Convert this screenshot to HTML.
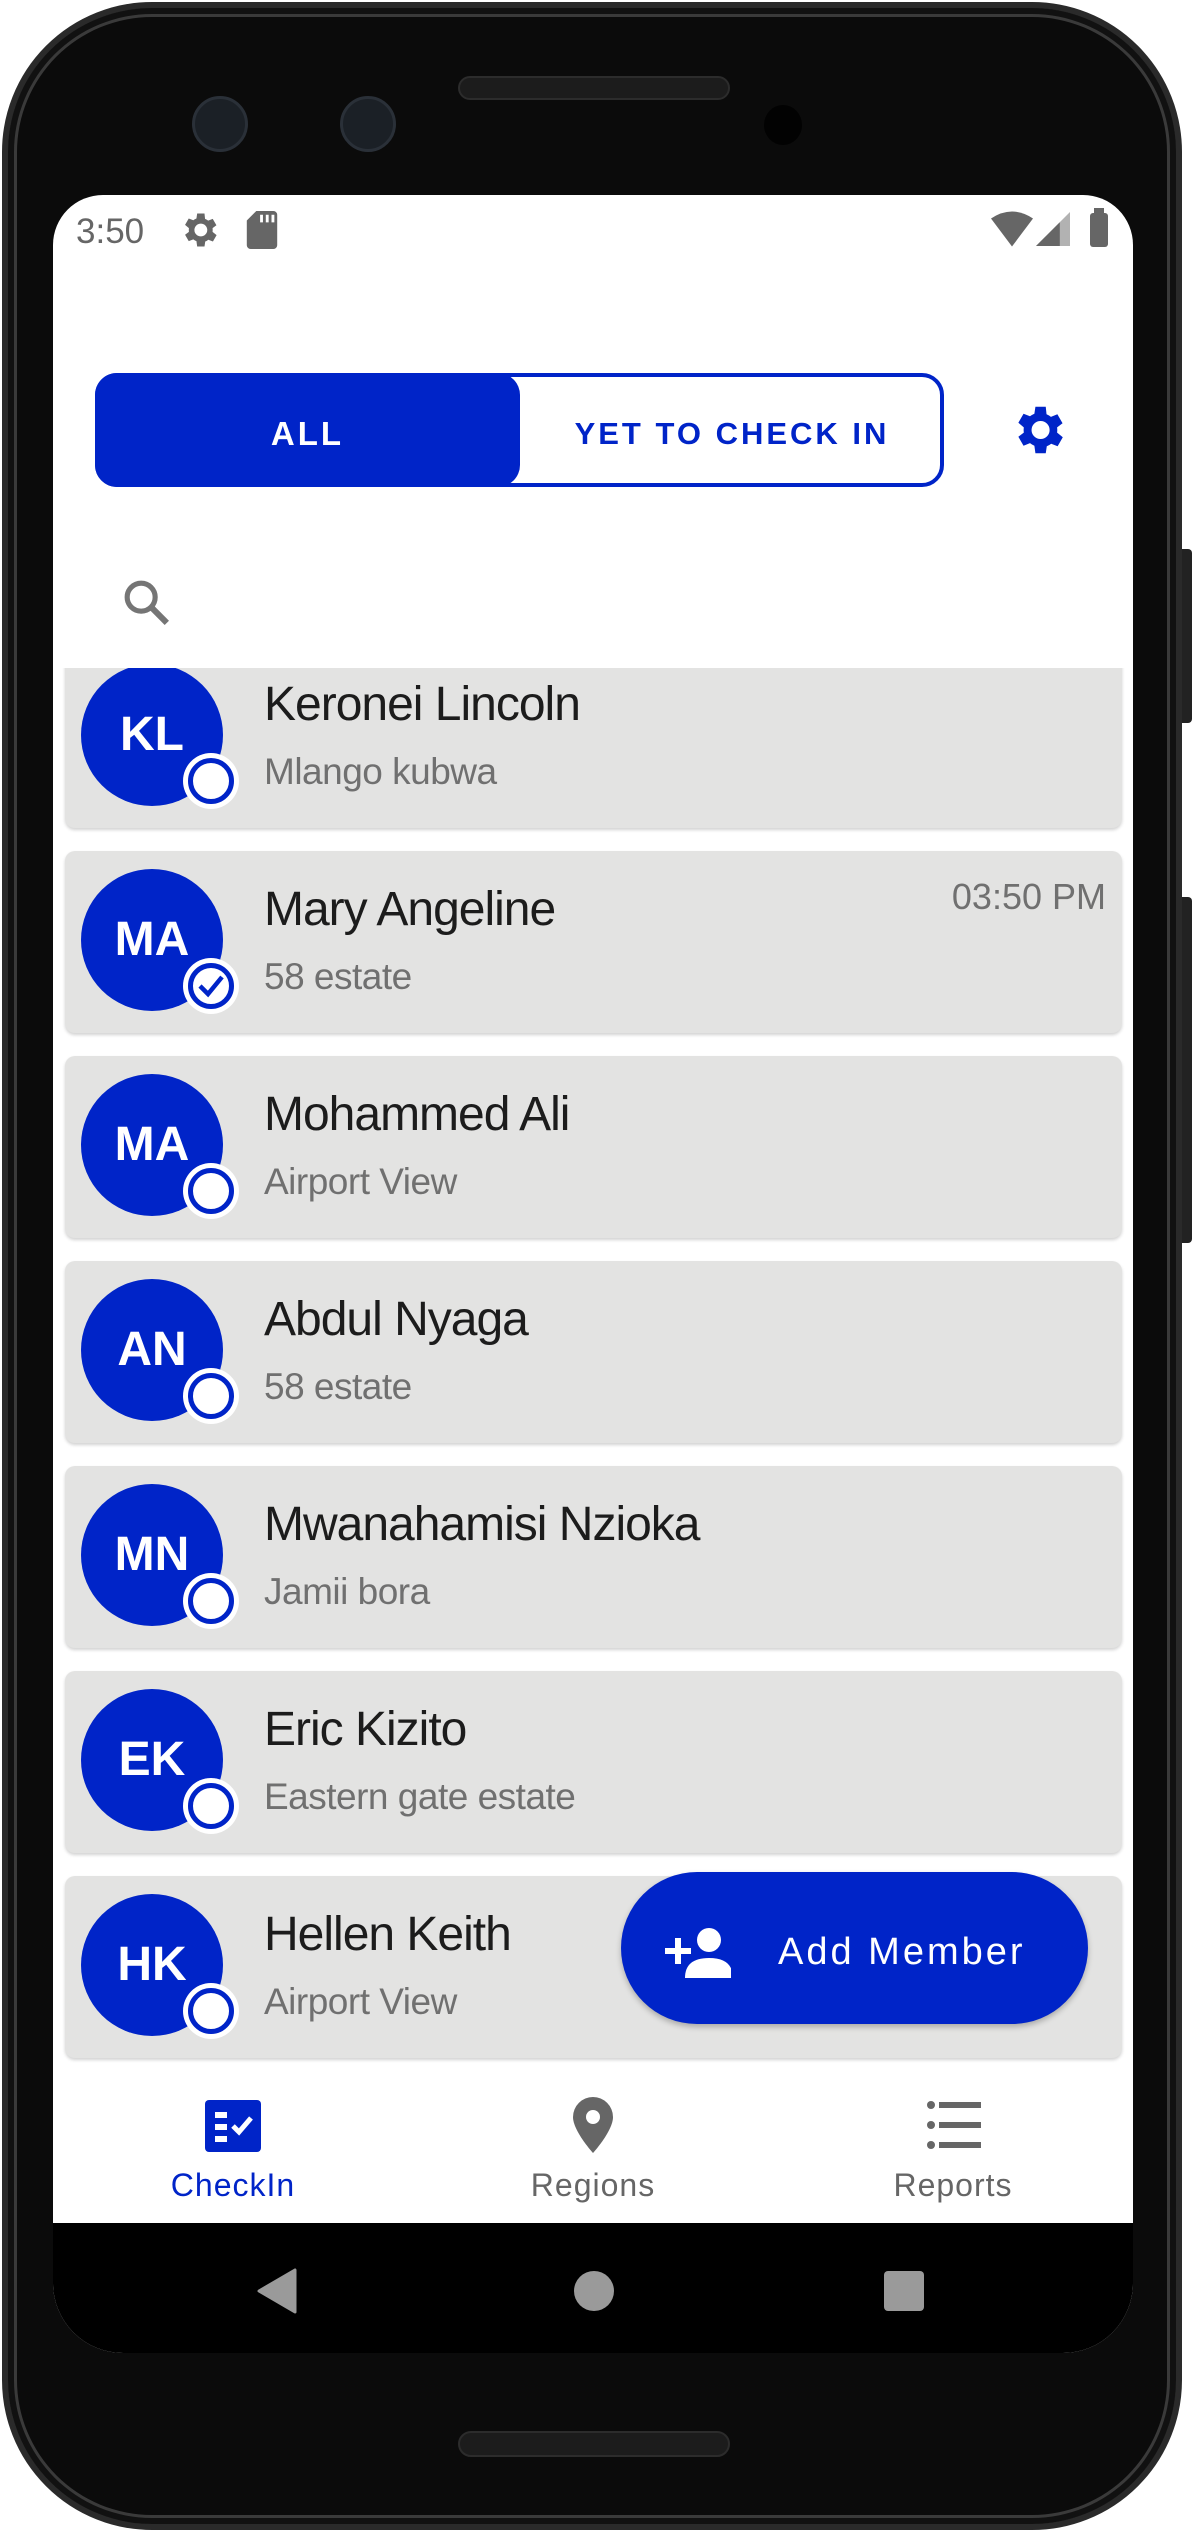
<!DOCTYPE html>
<html><head><meta charset="utf-8"><style>
*{margin:0;padding:0;box-sizing:border-box}
body{width:1194px;height:2532px;background:#fff;position:relative;overflow:hidden;font-family:"Liberation Sans",sans-serif}
.abs{position:absolute}
.phone{left:2px;top:2px;width:1180px;height:2528px;border-radius:150px;background:#0b0b0b;border:6px solid #2a2a2a;box-shadow:inset 0 0 0 6px #111,inset 0 0 0 9px #3a3a3a}
.screen{left:53px;top:195px;width:1080px;height:2158px;background:#fff;border-radius:50px 50px 70px 70px;overflow:hidden}
.card{position:absolute;left:12px;width:1057px;height:182px;background:#e3e3e2;border-radius:10px;box-shadow:0 2px 3px rgba(0,0,0,.18)}
.av{position:absolute;left:16px;top:18px;width:142px;height:142px;border-radius:50%;background:#0024c8;color:#fff;font-weight:bold;font-size:48px;line-height:142px;text-align:center}
.bd{position:absolute;left:118px;top:107px;width:56px;height:56px;border-radius:50%;background:#fff;padding:5px}
.bd div{width:46px;height:46px;border-radius:50%;border:5px solid #0024c8;background:#fff}
.nm{position:absolute;left:199px;top:31px;font-size:48px;color:#1c1c1c;letter-spacing:-1px}
.sb{position:absolute;left:199px;top:105px;font-size:37px;color:#707070;letter-spacing:-.5px}
</style></head><body>
<div class="abs" style="left:1180px;top:549px;width:12px;height:174px;background:#222;border-radius:0 4px 4px 0"></div>
<div class="abs" style="left:1180px;top:897px;width:12px;height:346px;background:#222;border-radius:0 4px 4px 0"></div>
<div class="abs phone"></div>
<div class="abs" style="left:458px;top:76px;width:272px;height:24px;border-radius:12px;background:#1c1c1c;border:2px solid #2c2c2c"></div>
<div class="abs" style="left:192px;top:96px;width:56px;height:56px;border-radius:50%;background:#1b2026;border:3px solid #2a3038"></div>
<div class="abs" style="left:340px;top:96px;width:56px;height:56px;border-radius:50%;background:#1b2026;border:3px solid #2a3038"></div>
<div class="abs" style="left:764px;top:105px;width:38px;height:40px;border-radius:50%;background:#020202"></div>
<div class="abs" style="left:458px;top:2431px;width:272px;height:26px;border-radius:13px;background:#1c1c1c;border:2px solid #2c2c2c"></div>

<div class="abs screen">
 <div class="abs" style="left:23px;top:17px;font-size:35px;color:#666">3:50</div>
 <svg class="abs" style="left:124px;top:13px" width="44" height="44" viewBox="0 0 24 24"><path fill="#666" d="M19.4 13a7.5 7.5 0 0 0 0-2l2.1-1.6-2-3.5-2.5 1a7 7 0 0 0-1.7-1L15 3h-4l-.4 2.7a7 7 0 0 0-1.7 1l-2.5-1-2 3.5L6.5 11a7.5 7.5 0 0 0 0 2l-2.1 1.6 2 3.5 2.5-1a7 7 0 0 0 1.7 1L11 21h4l.4-2.7a7 7 0 0 0 1.7-1l2.5 1 2-3.5zM13 15.5a3.5 3.5 0 1 1 0-7 3.5 3.5 0 0 1 0 7z"/></svg>
 <svg class="abs" style="left:193px;top:16px" width="32" height="38" viewBox="0 0 16 20"><path fill="#666" d="M5 0h9a2 2 0 0 1 2 2v16a2 2 0 0 1-2 2H2a2 2 0 0 1-2-2V5zM7 2v4h1.5V2zm3 0v4h1.5V2zm3 0v4h1.5V2z"/></svg>
 <svg class="abs" style="left:938px;top:16px" width="42" height="36" viewBox="0 0 24 20"><path fill="#666" d="M0 4Q12-4 24 4L12 20z"/></svg>
 <svg class="abs" style="left:983px;top:16px" width="34" height="36" viewBox="0 0 20 20"><path fill="#666" d="M20 0v20H0z" opacity=".5"/><path fill="#666" d="M14 6v14H0z"/></svg>
 <div class="abs" style="left:1037px;top:18px;width:18px;height:34px;background:#666;border-radius:3px"></div>
 <div class="abs" style="left:1041px;top:13px;width:10px;height:6px;background:#666"></div>

 <div class="abs" style="left:42px;top:178px;width:849px;height:114px;border:4px solid #0024c8;border-radius:22px"></div>
 <div class="abs" style="left:42px;top:178px;width:425px;height:114px;background:#0024c8;border-radius:22px"></div>
 <div class="abs" style="left:42px;top:182px;width:425px;height:113px;line-height:113px;text-align:center;color:#fff;font-size:33px;font-weight:bold;letter-spacing:3px">ALL</div>
 <div class="abs" style="left:467px;top:182px;width:424px;height:113px;line-height:113px;text-align:center;color:#0024c8;font-size:31px;font-weight:bold;letter-spacing:3px">YET TO CHECK IN</div>
 <svg class="abs" style="left:954px;top:204px" width="62" height="62" viewBox="0 0 24 24"><path fill="#0024c8" d="M19.4 13a7.5 7.5 0 0 0 0-2l2.1-1.6-2-3.5-2.5 1a7 7 0 0 0-1.7-1L15 3h-4l-.4 2.7a7 7 0 0 0-1.7 1l-2.5-1-2 3.5L6.5 11a7.5 7.5 0 0 0 0 2l-2.1 1.6 2 3.5 2.5-1a7 7 0 0 0 1.7 1L11 21h4l.4-2.7a7 7 0 0 0 1.7-1l2.5 1 2-3.5zM13 15.5a3.5 3.5 0 1 1 0-7 3.5 3.5 0 0 1 0 7z"/></svg>
 <svg class="abs" style="left:66px;top:380px" width="56" height="56" viewBox="0 0 24 24"><circle cx="9.5" cy="9.5" r="6" fill="none" stroke="#757575" stroke-width="2.2"/><path d="M14 14l6.5 6.5" stroke="#757575" stroke-width="2.6"/></svg>

 <div class="abs" style="left:0;top:473px;width:1080px;height:1399px;overflow:hidden">
  <div class="card" style="top:-22px"><div class="av">KL</div><div class="bd"><div></div></div><div class="nm">Keronei Lincoln</div><div class="sb">Mlango kubwa</div></div>
  <div class="card" style="top:183px"><div class="av">MA</div><div class="bd"><div style="position:relative"><svg style="position:absolute;left:4px;top:5px" width="28" height="26" viewBox="0 0 28 26"><path d="M3 13l8 8L25 4" fill="none" stroke="#0024c8" stroke-width="4.5"/></svg></div></div><div class="nm">Mary Angeline</div><div class="sb">58 estate</div><div style="position:absolute;right:16px;top:25px;font-size:36px;color:#707070">03:50 PM</div></div>
  <div class="card" style="top:388px"><div class="av">MA</div><div class="bd"><div></div></div><div class="nm">Mohammed Ali</div><div class="sb">Airport View</div></div>
  <div class="card" style="top:593px"><div class="av">AN</div><div class="bd"><div></div></div><div class="nm">Abdul Nyaga</div><div class="sb">58 estate</div></div>
  <div class="card" style="top:798px"><div class="av">MN</div><div class="bd"><div></div></div><div class="nm">Mwanahamisi Nzioka</div><div class="sb">Jamii bora</div></div>
  <div class="card" style="top:1003px"><div class="av">EK</div><div class="bd"><div></div></div><div class="nm">Eric Kizito</div><div class="sb">Eastern gate estate</div></div>
  <div class="card" style="top:1208px"><div class="av">HK</div><div class="bd"><div></div></div><div class="nm">Hellen Keith</div><div class="sb">Airport View</div></div>
 </div>
 <div class="abs" style="left:568px;top:1677px;width:467px;height:152px;border-radius:76px;background:#0024c8;box-shadow:0 3px 6px rgba(0,0,0,.25)"></div>
 <svg class="abs" style="left:612px;top:1731px" width="66" height="52" viewBox="0 0 33 26"><path fill="#fff" d="M0 11h5V6h3v5h5v3H8v5H5v-5H0z"/><circle cx="22" cy="7" r="6" fill="#fff"/><path fill="#fff" d="M10 26q0-10 12-10t12 10z"/></svg>
 <div class="abs" style="left:725px;top:1736px;font-size:38px;color:#fff;letter-spacing:3px">Add Member</div>

 <div class="abs" style="left:0;top:1874px;width:1080px;height:154px;background:#fff"></div>
 <svg class="abs" style="left:152px;top:1905px" width="56" height="52" viewBox="0 0 28 26"><rect width="28" height="26" rx="2" fill="#0024c8"/><path fill="#fff" d="M5 6h6v3H5zm0 6h6v3H5zm0 6h6v3H5z"/><path d="M14 13l3 3 6-7" fill="none" stroke="#fff" stroke-width="2.5"/></svg>
 <div class="abs" style="left:0;top:1972px;width:360px;text-align:center;font-size:32px;color:#0024c8;letter-spacing:1px">CheckIn</div>
 <svg class="abs" style="left:520px;top:1902px" width="40" height="56" viewBox="0 0 20 28"><path fill="#666" d="M10 0a10 10 0 0 1 10 10c0 7-10 18-10 18S0 17 0 10A10 10 0 0 1 10 0z"/><circle cx="10" cy="10" r="3.5" fill="#fff"/></svg>
 <div class="abs" style="left:360px;top:1972px;width:360px;text-align:center;font-size:32px;color:#666;letter-spacing:1px">Regions</div>
 <svg class="abs" style="left:874px;top:1905px" width="54" height="50" viewBox="0 0 27 25"><g fill="#666"><circle cx="2" cy="2.5" r="2"/><circle cx="2" cy="12.5" r="2"/><circle cx="2" cy="22.5" r="2"/><rect x="6" y="1" width="21" height="3"/><rect x="6" y="11" width="21" height="3"/><rect x="6" y="21" width="21" height="3"/></g></svg>
 <div class="abs" style="left:720px;top:1972px;width:360px;text-align:center;font-size:32px;color:#666;letter-spacing:1px">Reports</div>

 <div class="abs" style="left:0;top:2028px;width:1080px;height:130px;background:#000"></div>
 <svg class="abs" style="left:204px;top:2073px" width="40" height="46" viewBox="0 0 40 46"><path d="M38 2v42L2 23z" fill="#9a9a9a" stroke="#9a9a9a" stroke-width="3" stroke-linejoin="round"/></svg>
 <div class="abs" style="left:521px;top:2076px;width:40px;height:40px;border-radius:50%;background:#9a9a9a"></div>
 <div class="abs" style="left:831px;top:2076px;width:40px;height:40px;border-radius:4px;background:#9a9a9a"></div>
</div>
</body></html>
